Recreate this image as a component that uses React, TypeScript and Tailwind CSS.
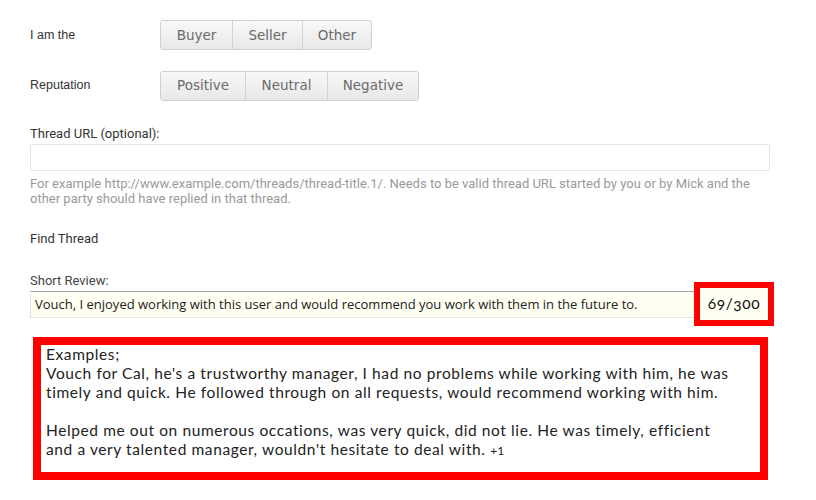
import React from 'react';

const roles = ['Buyer', 'Seller', 'Other'];
const reps = ['Positive', 'Neutral', 'Negative'];

const ButtonGroup: React.FC<{ items: string[]; widths: string[] }> = ({ items, widths }) => (
  <div className="flex rounded-[3px] border border-[#cfcfcf] overflow-hidden">
    {items.map((item, i) => (
      <button
        key={item}
        className={`${widths[i]} h-[28px] bg-gradient-to-b from-[#f8f8f8] to-[#e8e8e8] text-[#6b6b6b] ${i > 0 ? 'border-l border-[#d3d3d3]' : ''}`}
        style={{ fontFamily: 'Verdana, "DejaVu Sans", sans-serif', fontSize: 13.5 }}
      >
        {item}
      </button>
    ))}
  </div>
);

export default function App() {
  return (
    <div className="w-[816px] h-[500px] bg-white font-['Roboto',sans-serif] relative">
      <div className="pl-[30px] pt-[20px] w-[770px]">
        <div className="flex items-center h-[30px]">
          <span className="w-[130px] text-[12.5px] text-[#333] font-['Liberation_Sans',sans-serif]">I am the</span>
          <ButtonGroup items={roles} widths={['w-[71px]', 'w-[70px]', 'w-[69px]']} />
        </div>
        <div className="flex items-center h-[31px] mt-[20px]">
          <span className="w-[130px] text-[12.5px] text-[#333] font-['Liberation_Sans',sans-serif]">Reputation</span>
          <ButtonGroup items={reps} widths={['w-[84px]', 'w-[82px]', 'w-[91px]']} />
        </div>

        <div className="mt-[25px] text-[13px] leading-[15px] text-[#333]">Thread URL (optional):</div>
        <div className="mt-[3px] h-[27px] w-[740px] rounded-[2px] border border-[#e6e6e6] bg-white" />
        <p className="mt-[5px] w-[740px] text-[13px] leading-[15px] text-[#9a9a9a]">
          For example http://www.example.com/threads/thread-title.1/. Needs to be valid thread URL started by you or by Mick and the other party should have replied in that thread.
        </p>

        <div className="mt-[25px] text-[13px] leading-[15px] text-[#333]">Find Thread</div>

        <div className="mt-[27px] text-[13px] leading-[15px] text-[#444]">Short Review:</div>
        <div className="relative mt-[3px] w-[740px]">
          <div className="h-[27px] w-[670px] border-t border-t-[#a5a5a5] border-b border-b-[#e3e3e3] border-l border-l-[#e3e3e3] bg-[#fffff2] flex items-center pl-[4px]">
            <span className="text-[13px] text-[#222] font-['Open_Sans',sans-serif]">
              Vouch, I enjoyed working with this user and would recommend you work with them in the future to.
            </span>
          </div>
          <div className="absolute left-[664px] top-[-9px] w-[80px] h-[44px] border-[6px] border-[#ff0000] bg-[#fffff4] flex items-center justify-center">
            <span className="text-[15.5px] text-[#111] font-['Lato',sans-serif] oldstyle-nums tracking-[0.6px]">69/300</span>
          </div>
        </div>

        <div className="mt-[19px] ml-[3px] w-[735px] h-[143px] border-[8px] border-[#ff0000] bg-white px-[5px]">
          <div className="text-[15.5px] leading-[19px] tracking-[0.6px] text-[#222] font-['Lato',sans-serif]">
            <div>Examples;</div>
            <div>Vouch for Cal, he's a trustworthy manager, I had no problems while working with him, he was</div>
            <div>timely and quick. He followed through on all requests, would recommend working with him.</div>
            <div className="h-[19px]" />
            <div>Helped me out on numerous occations, was very quick, did not lie. He was timely, efficient</div>
            <div>and a very talented manager, wouldn't hesitate to deal with. <span className="text-[12px] tracking-normal">+1</span></div>
          </div>
        </div>
      </div>
    </div>
  );
}
